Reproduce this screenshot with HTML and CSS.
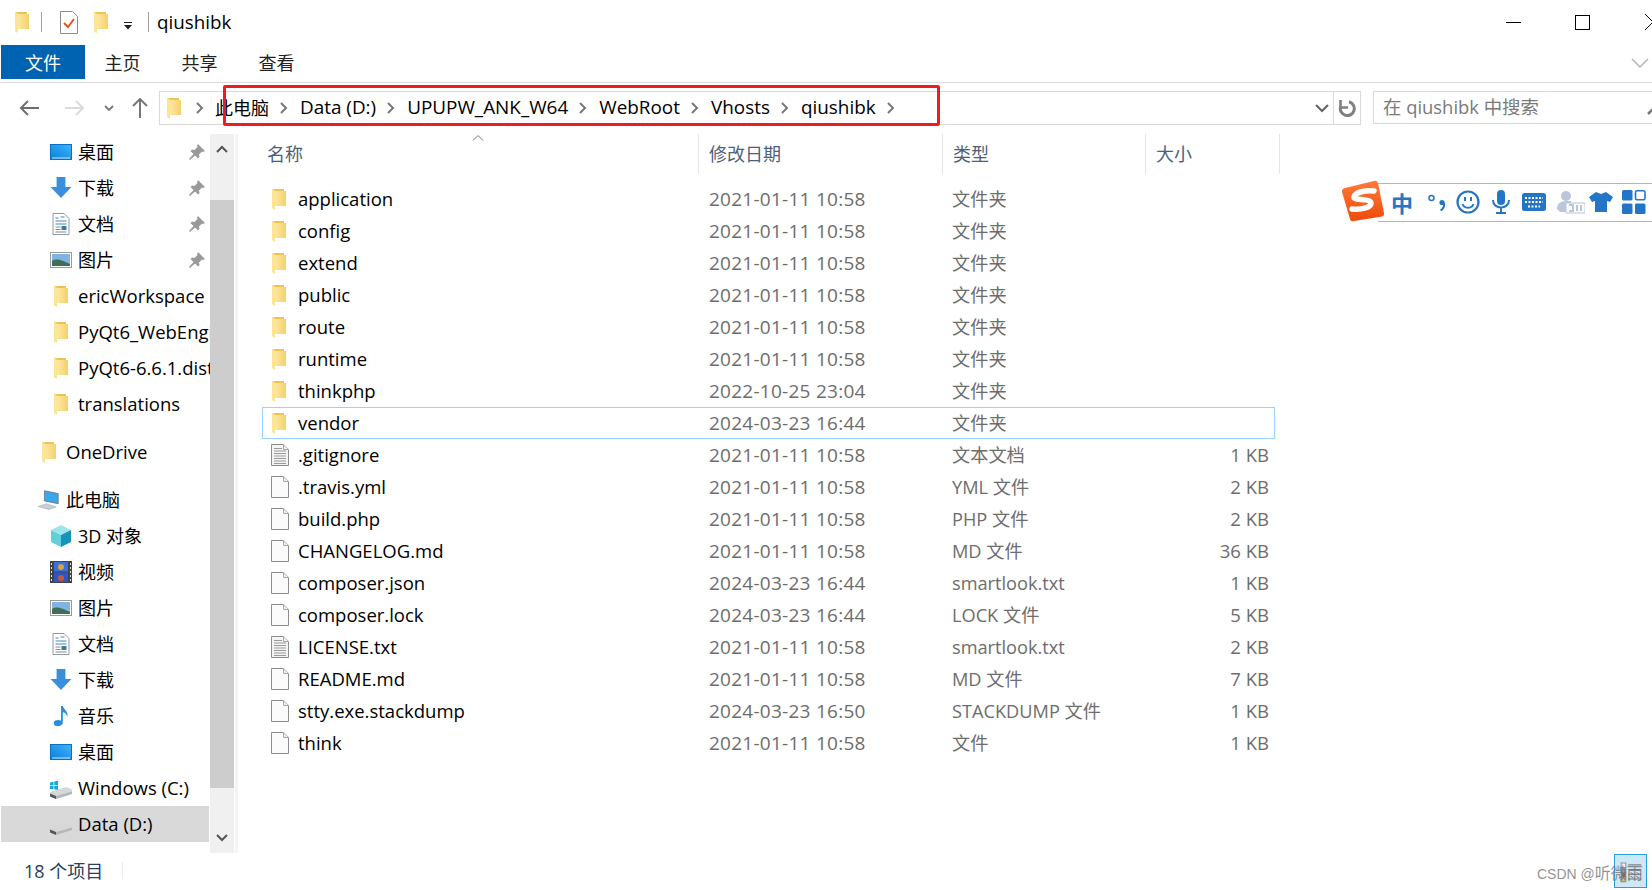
FILE: index.html
```html
<!DOCTYPE html>
<html lang="zh-CN">
<head>
  <meta charset="UTF-8" />
  <title>qiushibk</title>
  <link rel="stylesheet" href="styles.css">
</head>
<body>

  <svg class="defs" width="0" height="0">
    <defs>
      <linearGradient id="folderFront" x1="0" x2="1" y1="0" y2="0">
        <stop offset="0" stop-color="#fdeeb2" />
        <stop offset="1" stop-color="#f6d06a" />
      </linearGradient>
      <linearGradient id="screenBlue" x1="0" x2="1" y1="1" y2="0">
        <stop offset="0" stop-color="#0a7fe0" />
        <stop offset="1" stop-color="#3fb4f7" />
      </linearGradient>
      <linearGradient id="sogouRed" x1="0" x2="0" y1="0" y2="1">
        <stop offset="0" stop-color="#ff7a3a" />
        <stop offset="1" stop-color="#f04a0a" />
      </linearGradient>
      <symbol id="folder" viewBox="0 0 14 22">
        <path d="M0 1h12v2h2v15H0z" fill="#edc25a" />
        <path d="M0 1l3 2h11v15H3v4l-3-2z" fill="url(#folderFront)" />
        <path d="M0 1l3 2v19l-3-2z" fill="#fbe596" />
      </symbol>
      <symbol id="file" viewBox="0 0 18 22">
        <path d="M.5.5h12l5 5v16H.5z" fill="#fbfbfb" stroke="#8d8d8d" />
        <path d="M12.500.5v5h5" fill="#eee" stroke="#a8a8a8" />
      </symbol>
      <symbol id="textfile" viewBox="0 0 18 22">
        <path d="M.5.5h12l5 5v16H.5z" fill="#f4f4f4" stroke="#8d8d8d" />
        <path d="M12.500.5v5h5" fill="#eee" stroke="#a8a8a8" />
        <path d="M3 4.500h8M3 7h12M3 9.500h12M3 12h12M3 14.500h12M3 17h12M3 19.500h12" stroke="#9a9a9a" fill="none" />
      </symbol>
      <symbol id="desktop" viewBox="0 0 22 16">
        <rect x=".5" y=".5" width="21" height="15" fill="url(#screenBlue)" stroke="#0b6fc4" />
        <path d="M2 14h18" stroke="#c9e6fb" />
      </symbol>
      <symbol id="download" viewBox="0 0 20 20">
        <path d="M6 0h8v9h5.500l-9.500 10-9.500-10H6z" fill="#3a8fdd" />
      </symbol>
      <symbol id="docs" viewBox="0 0 17 22">
        <path d="M.5.500h11l5 5v16H.500z" fill="#fff" stroke="#8f9aa5" />
        <path d="M3 5h3M8 4h4M3 8h11M3 11h11" stroke="#3c86c6" fill="none" />
        <path d="M3 14h5M3 16.500h5M3 19h11" stroke="#888" fill="none" />
        <rect x="9" y="13" width="5" height="4" fill="#3f7a93" />
      </symbol>
      <symbol id="picture" viewBox="0 0 22 16">
        <rect x=".5" y=".5" width="21" height="15" fill="#fff" stroke="#9a9a9a" />
        <rect x="2" y="2" width="18" height="12" fill="#7fb5e0" />
        <path d="M2 9c5-3 9-1 18 3v2H2z" fill="#3f6f57" />
      </symbol>
      <symbol id="pc" viewBox="0 0 24 22">
        <path d="M7 1l15 3v11L7 12z" fill="#38a8ea" stroke="#6d7d8a" />
        <path d="M0 18l9-3 11 3.500-8 3z" fill="#c8ced4" stroke="#9aa2a9" stroke-width=".5" />
      </symbol>
      <symbol id="cube" viewBox="0 0 22 22">
        <path d="M11 0l10 5-10 5L1 5z" fill="#9fe6ea" />
        <path d="M1 5l10 5v12L1 17z" fill="#5fd0d8" />
        <path d="M21 5l-10 5v12l10-5z" fill="#1593b8" />
      </symbol>
      <symbol id="video" viewBox="0 0 22 22">
        <rect width="22" height="22" fill="#444" />
        <rect x="4" y="1" width="14" height="9.500" fill="#3d6fd8" />
        <rect x="4" y="11.500" width="14" height="9.500" fill="#2e55c8" />
        <circle cx="11" cy="6" r="3" fill="#d9a23a" />
        <circle cx="11" cy="17" r="3" fill="#c9563a" />
        <path d="M1.500 2v18M20.500 2v18" stroke="#ddd" stroke-dasharray="2 2" fill="none" />
      </symbol>
      <symbol id="music" viewBox="0 0 18 24">
        <path d="M9 1h2c1 4 6 5 5 12-1-3-3-5-5-5v11c0 3-3 4-6 4-3 0-4-2-4-3.500C1 17 5 15.500 9 17z" fill="#2b8fe0" />
      </symbol>
      <symbol id="drive" viewBox="0 0 22 22">
        <path d="M0 15l16-5 6 2.500V17L6 22l-6-2.500z" fill="#d5d7d9" />
        <path d="M0 16.500L6 19v3l-6-2.500z" fill="#555" />
        <path d="M6 19l16-4.500V17L6 22z" fill="#b5b8ba" />
      </symbol>
      <symbol id="winDrive" viewBox="0 0 22 22">
        <path d="M0 15l16-5 6 2.500V17L6 22l-6-2.500z" fill="#d5d7d9" />
        <path d="M0 16.500L6 19v3l-6-2.500z" fill="#555" />
        <path d="M6 19l16-4.500V17L6 22z" fill="#b5b8ba" />
        <path d="M0 5.500l3.500-.8v3.300H0zM4.300 4.500L8 3.700v4.300H4.300zM0 8.800h3.500v3.500L0 12zM4.300 8.800H8v4L4.300 12.400z" fill="#12a5e8" />
      </symbol>
      <symbol id="pin" viewBox="0 0 16 16">
        <path d="M9 0l7 7-2 1-1-.500-3 3 .500 2.500-1.500 1.500-3-3L1 16l-1-1 4.500-5-3-3L3 5.500l2.500.500 3-3L8 2z" fill="#9a9a9a" />
      </symbol>
    </defs>
  </svg>

  <div class="titlebar">
    <svg class="qa-folder"><use href="#folder" /></svg>
    <span class="qa-sep"></span>
    <svg class="qa-check" viewBox="0 0 18 23">
      <path d="M.5.500h12l5 5v17H.500z" fill="#fff" stroke="#8d8d8d" />
      <path d="M4 12l4 4 6-8" fill="none" stroke="#e2541f" stroke-width="2" />
    </svg>
    <svg class="qa-folder second"><use href="#folder" /></svg>
    <svg class="qa-drop" viewBox="0 0 10 8">
      <path d="M1 0h8v1H1zM1 3h8L5 7.500z" fill="#222" />
    </svg>
    <span class="qa-sep second"></span>
    <span class="title">qiushibk</span>
    <div class="window-btns">
      <span class="win-min"></span>
      <span class="win-max"></span>
      <svg class="win-close" viewBox="0 0 16 16"><path d="M0 0l16 16M16 0L0 16" stroke="#111" fill="none" /></svg>
    </div>
  </div>

  <div class="ribbon">
    <div class="tab file-tab">文件</div>
    <div class="tab">主页</div>
    <div class="tab">共享</div>
    <div class="tab">查看</div>
    <svg class="ribbon-toggle" viewBox="0 0 18 10"><path d="M1 1l8 8 8-8" fill="none" stroke="#b5b5b5" stroke-width="1.500" /></svg>
  </div>

  <div class="navbar">
    <div class="nav-btns">
      <svg class="nav-back" viewBox="0 0 20 16"><path d="M9 1L2 8l7 7M2 8h18" fill="none" stroke="#6e6e6e" stroke-width="2" /></svg>
      <svg class="nav-fwd" viewBox="0 0 20 16"><path d="M11 1l7 7-7 7M18 8H0" fill="none" stroke="#dcdcdc" stroke-width="2" /></svg>
      <svg class="nav-recent" viewBox="0 0 10 6"><path d="M1 1l4 4 4-4" fill="none" stroke="#777" stroke-width="1.800" /></svg>
      <svg class="nav-up" viewBox="0 0 16 20"><path d="M1 8l7-7 7 7M8 1v19" fill="none" stroke="#777" stroke-width="2" /></svg>
    </div>
    <div class="address">
      <svg class="addr-folder"><use href="#folder" /></svg>
      <svg class="crumb-arrow"><path d="M1 1l5 5-5 5" fill="none" stroke="#777" stroke-width="2" /></svg>
      <span class="crumb cjk">此电脑</span>
      <svg class="crumb-arrow"><path d="M1 1l5 5-5 5" fill="none" stroke="#777" stroke-width="2" /></svg>
      <span class="crumb">Data (D:)</span>
      <svg class="crumb-arrow"><path d="M1 1l5 5-5 5" fill="none" stroke="#777" stroke-width="2" /></svg>
      <span class="crumb">UPUPW_ANK_W64</span>
      <svg class="crumb-arrow"><path d="M1 1l5 5-5 5" fill="none" stroke="#777" stroke-width="2" /></svg>
      <span class="crumb">WebRoot</span>
      <svg class="crumb-arrow"><path d="M1 1l5 5-5 5" fill="none" stroke="#777" stroke-width="2" /></svg>
      <span class="crumb">Vhosts</span>
      <svg class="crumb-arrow"><path d="M1 1l5 5-5 5" fill="none" stroke="#777" stroke-width="2" /></svg>
      <span class="crumb">qiushibk</span>
      <svg class="crumb-arrow"><path d="M1 1l5 5-5 5" fill="none" stroke="#777" stroke-width="2" /></svg>
      <svg class="addr-drop" viewBox="0 0 14 9"><path d="M1 1l6 6 6-6" fill="none" stroke="#666" stroke-width="2.200" /></svg>
      <div class="addr-refresh">
        <svg viewBox="0 0 18 18" width="18" height="18"><path d="M11 2.800a7 7 0 1 1-8.500 5" fill="none" stroke="#808080" stroke-width="3" /><path d="M2.500 1v7.500H10" fill="none" stroke="#808080" stroke-width="2.600" /></svg>
      </div>
    </div>
    <div class="search">
      <span>在 qiushibk 中搜索</span>
      <svg class="search-icon" viewBox="0 0 18 18"><circle cx="11" cy="7" r="5" fill="none" stroke="#777" stroke-width="2" /><path d="M7 11l-6 6" stroke="#777" stroke-width="2.500" /></svg>
    </div>
  </div>

  <div class="main">
    <div class="sidebar">
      <ul class="tree">
        <li class="pinned"><svg class="ic-wide"><use href="#desktop" /></svg><span class="cjk">桌面</span><svg class="pin"><use href="#pin" /></svg></li>
        <li class="pinned"><svg class="ic-wide"><use href="#download" /></svg><span class="cjk">下载</span><svg class="pin"><use href="#pin" /></svg></li>
        <li class="pinned"><svg class="ic-wide"><use href="#docs" /></svg><span class="cjk">文档</span><svg class="pin"><use href="#pin" /></svg></li>
        <li class="pinned"><svg class="ic-wide"><use href="#picture" /></svg><span class="cjk">图片</span><svg class="pin"><use href="#pin" /></svg></li>
        <li><svg class="ic-wide"><use href="#folder" /></svg><span>ericWorkspace</span></li>
        <li><svg class="ic-wide"><use href="#folder" /></svg><span>PyQt6_WebEngine</span></li>
        <li><svg class="ic-wide"><use href="#folder" /></svg><span>PyQt6-6.6.1.dist-info</span></li>
        <li><svg class="ic-wide"><use href="#folder" /></svg><span>translations</span></li>
        <li class="top-level spaced"><svg class="ic-wide"><use href="#folder" /></svg><span>OneDrive</span></li>
        <li class="top-level spaced"><svg class="ic-wide"><use href="#pc" /></svg><span class="cjk">此电脑</span></li>
        <li><svg class="ic-wide"><use href="#cube" /></svg><span class="cjk">3D 对象</span></li>
        <li><svg class="ic-wide"><use href="#video" /></svg><span class="cjk">视频</span></li>
        <li><svg class="ic-wide"><use href="#picture" /></svg><span class="cjk">图片</span></li>
        <li><svg class="ic-wide"><use href="#docs" /></svg><span class="cjk">文档</span></li>
        <li><svg class="ic-wide"><use href="#download" /></svg><span class="cjk">下载</span></li>
        <li><svg class="ic-wide"><use href="#music" /></svg><span class="cjk">音乐</span></li>
        <li><svg class="ic-wide"><use href="#desktop" /></svg><span class="cjk">桌面</span></li>
        <li><svg class="ic-wide"><use href="#winDrive" /></svg><span>Windows (C:)</span></li>
        <li class="current"><svg class="ic-wide"><use href="#drive" /></svg><span>Data (D:)</span></li>
      </ul>
      <div class="scrollbar">
        <div class="scroll-btn"><svg viewBox="0 0 12 8" width="12" height="8"><path d="M1 7l5-5 5 5" fill="none" stroke="#555" stroke-width="2" /></svg></div>
        <div class="scroll-thumb"></div>
        <div class="scroll-btn down"><svg viewBox="0 0 12 8" width="12" height="8"><path d="M1 1l5 5 5-5" fill="none" stroke="#555" stroke-width="2" /></svg></div>
      </div>
    </div>

    <div class="files">
      <div class="file-head">
        <div class="col-name">名称<svg class="sort-arrow" viewBox="0 0 12 6"><path d="M1 5.500l5-5 5 5" fill="none" stroke="#777" /></svg></div>
        <div>修改日期</div>
        <div>类型</div>
        <div>大小</div>
      </div>
      <div class="file-row"><div class="name"><svg class="folder-ic"><use href="#folder" /></svg>application</div><div class="date">2021-01-11 10:58</div><div class="type">文件夹</div><div></div></div>
      <div class="file-row"><div class="name"><svg class="folder-ic"><use href="#folder" /></svg>config</div><div class="date">2021-01-11 10:58</div><div class="type">文件夹</div><div></div></div>
      <div class="file-row"><div class="name"><svg class="folder-ic"><use href="#folder" /></svg>extend</div><div class="date">2021-01-11 10:58</div><div class="type">文件夹</div><div></div></div>
      <div class="file-row"><div class="name"><svg class="folder-ic"><use href="#folder" /></svg>public</div><div class="date">2021-01-11 10:58</div><div class="type">文件夹</div><div></div></div>
      <div class="file-row"><div class="name"><svg class="folder-ic"><use href="#folder" /></svg>route</div><div class="date">2021-01-11 10:58</div><div class="type">文件夹</div><div></div></div>
      <div class="file-row"><div class="name"><svg class="folder-ic"><use href="#folder" /></svg>runtime</div><div class="date">2021-01-11 10:58</div><div class="type">文件夹</div><div></div></div>
      <div class="file-row"><div class="name"><svg class="folder-ic"><use href="#folder" /></svg>thinkphp</div><div class="date">2022-10-25 23:04</div><div class="type">文件夹</div><div></div></div>
      <div class="file-row focused"><div class="name"><svg class="folder-ic"><use href="#folder" /></svg>vendor</div><div class="date">2024-03-23 16:44</div><div class="type">文件夹</div><div></div></div>
      <div class="file-row"><div class="name"><svg class="file-ic"><use href="#textfile" /></svg>.gitignore</div><div class="date">2021-01-11 10:58</div><div class="type">文本文档</div><div class="size">1 KB</div></div>
      <div class="file-row"><div class="name"><svg class="file-ic"><use href="#file" /></svg>.travis.yml</div><div class="date">2021-01-11 10:58</div><div class="type">YML 文件</div><div class="size">2 KB</div></div>
      <div class="file-row"><div class="name"><svg class="file-ic"><use href="#file" /></svg>build.php</div><div class="date">2021-01-11 10:58</div><div class="type">PHP 文件</div><div class="size">2 KB</div></div>
      <div class="file-row"><div class="name"><svg class="file-ic"><use href="#file" /></svg>CHANGELOG.md</div><div class="date">2021-01-11 10:58</div><div class="type">MD 文件</div><div class="size">36 KB</div></div>
      <div class="file-row"><div class="name"><svg class="file-ic"><use href="#file" /></svg>composer.json</div><div class="date">2024-03-23 16:44</div><div class="type">smartlook.txt</div><div class="size">1 KB</div></div>
      <div class="file-row"><div class="name"><svg class="file-ic"><use href="#file" /></svg>composer.lock</div><div class="date">2024-03-23 16:44</div><div class="type">LOCK 文件</div><div class="size">5 KB</div></div>
      <div class="file-row"><div class="name"><svg class="file-ic"><use href="#textfile" /></svg>LICENSE.txt</div><div class="date">2021-01-11 10:58</div><div class="type">smartlook.txt</div><div class="size">2 KB</div></div>
      <div class="file-row"><div class="name"><svg class="file-ic"><use href="#file" /></svg>README.md</div><div class="date">2021-01-11 10:58</div><div class="type">MD 文件</div><div class="size">7 KB</div></div>
      <div class="file-row"><div class="name"><svg class="file-ic"><use href="#file" /></svg>stty.exe.stackdump</div><div class="date">2024-03-23 16:50</div><div class="type">STACKDUMP 文件</div><div class="size">1 KB</div></div>
      <div class="file-row"><div class="name"><svg class="file-ic"><use href="#file" /></svg>think</div><div class="date">2021-01-11 10:58</div><div class="type">文件</div><div class="size">1 KB</div></div>
    </div>
  </div>

  <div class="statusbar">
    <span class="item-count">18 个项目</span>
    <span class="status-sep"></span>
  </div>

  <!-- things lying over the window -->
  <div class="red-box"></div>

  <div class="ime-bar">
    <svg class="ime-logo" viewBox="0 0 44 42">
      <path d="M4 8l29-7c2-.500 3 0 4 2l6 30c.500 2-.500 3-2 3.500L13 41c-2 .500-3.500 0-4-2L1 12c-.500-2 1-3.500 3-4z" fill="url(#sogouRed)" />
      <path d="M33 11c-8-1-19 1-20 6-.500 4 16 1 17 6 .500 4-9 7-19 6" fill="none" stroke="#fff" stroke-width="5.500" stroke-linecap="round" />
    </svg>
    <span class="ime-zh">中</span>
    <svg class="ime-punct" viewBox="0 0 18 18"><circle cx="3.500" cy="5" r="2.500" fill="none" stroke="#2376c7" stroke-width="1.500" /><circle cx="14" cy="9.500" r="2.600" fill="#2376c7" /><path d="M16 10c.500 3-1 6-3.500 7.500" fill="none" stroke="#2376c7" stroke-width="2" /></svg>
    <svg class="ime-ic smile" viewBox="0 0 24 24"><circle cx="12" cy="12" r="10.500" fill="none" stroke="#2376c7" stroke-width="2.200" /><path d="M6.500 14c1.500 5 9.500 5 11 0" fill="none" stroke="#2376c7" stroke-width="1.800" /><path d="M9 7v4M15 7v4" stroke="#2376c7" stroke-width="2" /></svg>
    <svg class="ime-ic" viewBox="0 0 24 24"><rect x="8" y="0" width="8" height="15" rx="4" fill="#2376c7" /><path d="M4 10c0 10 16 10 16 0M12 18v4M7 23h10" fill="none" stroke="#2376c7" stroke-width="2" /></svg>
    <svg class="ime-ic" viewBox="0 0 24 24"><rect y="3" width="24" height="18" rx="2.500" fill="#2376c7" /><path d="M3 8h18M3 12h18M6 16.500h12" stroke="#fff" stroke-width="2" stroke-dasharray="2 1.500" /></svg>
    <svg class="ime-ic person" viewBox="0 0 28 24"><circle cx="9" cy="6" r="5" fill="#b9c6db" /><path d="M0 19c0-6 4-8 10-8h4v11H3z" fill="#b9c6db" /><rect x="9" y="13" width="19" height="10" fill="#fff" stroke="#b9c6db" /><path d="M12 15h4v6h-4M20 15v6M24 15v6" stroke="#b9c6db" stroke-width="2" fill="none" /></svg>
    <svg class="ime-ic shirt" viewBox="0 0 24 24"><path d="M7 2l5 2 5-2 7 5-3 5-3-1v11H6V11l-3 1-3-5z" fill="#2376c7" /></svg>
    <svg class="ime-ic" viewBox="0 0 24 24"><rect width="10.500" height="10.500" rx="1.500" fill="#2376c7" /><rect x="13.500" y=".8" width="9.500" height="9" rx="1.500" fill="none" stroke="#2376c7" stroke-width="1.600" /><rect y="13.500" width="10.500" height="10.500" rx="1.500" fill="#2376c7" /><rect x="13" y="13.500" width="10.500" height="10.500" rx="1.500" fill="#2376c7" /></svg>
  </div>

  <div class="view-btn">
    <svg viewBox="0 0 33 34" width="31" height="32"><rect x="6.500" y="8.500" width="5" height="5" fill="#f3f3f3" stroke="#888" /><rect x="6.500" y="13.500" width="5" height="5" fill="#8ab" stroke="#888" /><rect x="6.500" y="18.500" width="5" height="5" fill="#b55" stroke="#888" /><rect x="6.500" y="23.500" width="5" height="5" fill="#cb6" stroke="#888" /><path d="M14 10.500h14M14 15.500h14M14 20.500h14M14 25.500h14" stroke="#666" /></svg>
  </div>

  <div class="watermark">CSDN @<span class="mark-name">听微雨</span></div>

</body>
</html>
```

FILE: styles.css
```css
* {
  box-sizing: border-box;
}

html, body {
  height: 100%;
}

body {
  margin: 0;
  width: 1652px;
  height: 890px;
  overflow: hidden;
  position: relative;
  background: #fff;
  color: #000;
  font-family: "Open Sans", "Noto Sans CJK SC", sans-serif;
  font-size: 18.5px;
}

.defs {
  position: absolute;
}

.cjk {
  font-size: 18px;
}

/* title bar */
.titlebar {
  height: 44px;
  display: flex;
  align-items: center;
  padding-left: 15px;
}

.qa-folder {
  width: 14px;
  height: 22px;
}

.qa-folder.second {
  margin-left: 16px;
}

.qa-sep {
  width: 1px;
  height: 20px;
  background: #a0a0a0;
  margin-left: 12px;
}

.qa-sep.second {
  margin-left: 15px;
}

.qa-check {
  width: 18px;
  height: 23px;
  margin-left: 18px;
}

.qa-drop {
  width: 10px;
  height: 8px;
  margin-left: 15px;
  margin-top: 8px;
}

.title {
  margin-left: 8px;
  font-size: 18.8px;
}

.window-btns {
  margin-left: auto;
  display: flex;
  align-items: center;
  height: 100%;
}

.win-min {
  width: 15px;
  height: 1px;
  background: #000;
}

.win-max {
  width: 15px;
  height: 15px;
  border: 1px solid #000;
  margin-left: 54px;
}

.win-close {
  width: 16px;
  height: 16px;
  margin-left: 55px;
  margin-right: -9px;
}

/* ribbon tabs */
.ribbon {
  height: 39px;
  display: flex;
  padding-left: 1px;
  border-bottom: 1px solid #dadada;
  position: relative;
}

.tab {
  width: 77px;
  height: 34px;
  margin-top: 1px;
  line-height: 36px;
  text-align: center;
  font-size: 18px;
  color: #222;
}

.file-tab {
  width: 84px;
  margin-right: -1px;
  background: #0063b1;
  color: #fff;
}

.ribbon-toggle {
  width: 18px;
  height: 10px;
  margin-left: auto;
  margin-right: 3px;
  margin-top: 14px;
}

/* address row */
.navbar {
  height: 51px;
  display: flex;
  align-items: flex-start;
  padding-top: 8px;
}

.nav-btns {
  width: 159px;
  height: 34px;
  display: flex;
  align-items: center;
  padding-left: 19px;
}

.nav-back {
  width: 20px;
  height: 16px;
}

.nav-fwd {
  width: 20px;
  height: 16px;
  margin-left: 26px;
}

.nav-recent {
  width: 10px;
  height: 6px;
  margin-left: 19px;
}

.nav-up {
  width: 16px;
  height: 20px;
  margin-left: 18px;
}

.address {
  width: 1202px;
  height: 34px;
  border: 1px solid #d9d9d9;
  display: flex;
  align-items: center;
  padding-left: 7px;
  font-size: 18.9px;
}

.addr-folder {
  width: 14px;
  height: 22px;
  margin-right: 15px;
}

.crumb-arrow {
  width: 8px;
  height: 12px;
}

.crumb {
  margin: 0 11px 3px 12px;
  white-space: nowrap;
}

.crumb.cjk {
  font-size: 18px;
  margin-left: 11px;
}

.addr-drop {
  width: 14px;
  height: 9px;
  margin-left: auto;
  margin-right: 4px;
}

.addr-refresh {
  width: 27px;
  height: 100%;
  border-left: 1px solid #d9d9d9;
  display: flex;
  align-items: center;
  justify-content: center;
}

.search {
  flex: 1;
  height: 33px;
  margin-left: 12px;
  border: 1px solid #d9d9d9;
  border-right: none;
  display: flex;
  align-items: center;
  padding: 0 0 3px 9px;
  color: #7a7a7a;
  font-size: 18.4px;
  overflow: hidden;
}

.search-icon {
  width: 18px;
  height: 18px;
  flex: none;
  margin-left: auto;
  margin-right: -13px;
}

/* main area */
.main {
  height: 719px;
  display: flex;
}

.sidebar {
  width: 238px;
  display: flex;
  border-right: 3px solid #f4f4f4;
  padding-right: 1px;
}

.tree {
  list-style: none;
  margin: 0;
  padding: 0 1px 0 1px;
  width: 210px;
  overflow: hidden;
}

.tree li {
  height: 36px;
  display: flex;
  align-items: center;
  padding-left: 49px;
  position: relative;
  white-space: nowrap;
}

.tree li span {
  margin-left: 6px;
  margin-bottom: 2px;
}

.tree li.top-level {
  padding-left: 37px;
}

.tree li.spaced {
  margin-top: 12px;
}

.tree li.current {
  background: #d9d9d9;
}

.ic-wide {
  width: 22px;
  height: 22px;
  flex: none;
}

.pin {
  position: absolute;
  right: 4px;
  top: 10px;
  width: 16px;
  height: 16px;
}

.scrollbar {
  width: 24px;
  display: flex;
  flex-direction: column;
  background: #f0f0f0;
}

.scroll-btn {
  height: 66px;
  display: flex;
  justify-content: center;
  padding-top: 11px;
}

.scroll-btn.down {
  height: 65px;
  align-items: flex-end;
  padding-bottom: 11px;
}

.scroll-thumb {
  flex: 1;
  background: #cdcdcd;
}

/* file list */
.files {
  flex: 1;
  padding-left: 24px;
}

.file-head {
  display: grid;
  grid-template-columns: 437px 244px 203px 134px;
  height: 40px;
  margin-bottom: 9px;
  color: #4c607a;
  font-size: 18px;
}

.file-head > div {
  line-height: 40px;
  padding-left: 10px;
  border-right: 1px solid #e5e5e5;
  white-space: nowrap;
}

.file-head .col-name {
  padding-left: 5px;
  position: relative;
}

.sort-arrow {
  position: absolute;
  left: 210px;
  top: 1px;
  width: 12px;
  height: 6px;
}

.file-row {
  display: grid;
  grid-template-columns: 436px 244px 203px 128px;
  width: 1013px;
  height: 32px;
  line-height: 30px;
  border: 1px solid transparent;
  color: #6d6d6d;
  white-space: nowrap;
}

.file-row > div {
  padding-left: 9px;
}

.file-row .name {
  display: flex;
  align-items: center;
  color: #000;
}

.file-row .date {
  padding-left: 10px;
  font-size: 19px;
  letter-spacing: .26px;
}

.file-row .type {
  font-size: 18.2px;
}

.file-row .size {
  padding-right: 5px;
  text-align: right;
}

.file-row.focused {
  border-color: #99d1ff;
}

.folder-ic {
  width: 14px;
  height: 22px;
  margin-right: 12px;
}

.file-ic {
  width: 18px;
  height: 22px;
  margin-left: -1px;
  margin-right: 9px;
}

/* status bar */
.statusbar {
  height: 37px;
  display: flex;
  align-items: center;
  padding: 0 0 3px 24px;
  color: #26405e;
  font-size: 18px;
}

.status-sep {
  width: 1px;
  height: 17px;
  background: #ececec;
  margin-left: 19px;
}

/* overlays */
.red-box {
  position: absolute;
  left: 223px;
  top: 85px;
  width: 717px;
  height: 41px;
  border: 3px solid #ed1c24;
  border-radius: 2px;
}

.ime-bar {
  position: absolute;
  left: 1378px;
  top: 183px;
  width: 274px;
  height: 39px;
  padding-bottom: 2px;
  background: #fff;
  border-top: 1px solid #b5b5b5;
  border-bottom: 1px solid #b5b5b5;
  display: flex;
  align-items: center;
  color: #2376c7;
}

.ime-logo {
  position: absolute;
  left: -37px;
  top: -4px;
  width: 44px;
  height: 42px;
}

.ime-zh {
  margin-left: 13px;
  font-size: 22px;
  font-weight: 700;
}

.ime-punct {
  width: 18px;
  height: 18px;
  margin-left: 15px;
}

.ime-ic {
  width: 24px;
  height: 24px;
  margin-left: 9px;
}

.ime-ic.smile {
  margin-left: 10px;
}

.ime-ic.person {
  width: 28px;
  margin-left: 11px;
}

.ime-ic.shirt {
  margin-left: 4px;
}

.view-btn {
  position: absolute;
  left: 1614px;
  top: 854px;
  width: 33px;
  height: 34px;
  background: #cce8f7;
  border: 1px solid #26a0da;
  display: flex;
  align-items: center;
  justify-content: center;
}

.watermark {
  position: absolute;
  left: 1537px;
  top: 860px;
  font-family: "Liberation Sans", "Noto Sans CJK SC", sans-serif;
  font-size: 14px;
  color: rgba(110, 110, 110, .75);
  white-space: nowrap;
}

.mark-name {
  font-size: 16px;
  font-family: "Noto Sans CJK SC", sans-serif;
}
```
